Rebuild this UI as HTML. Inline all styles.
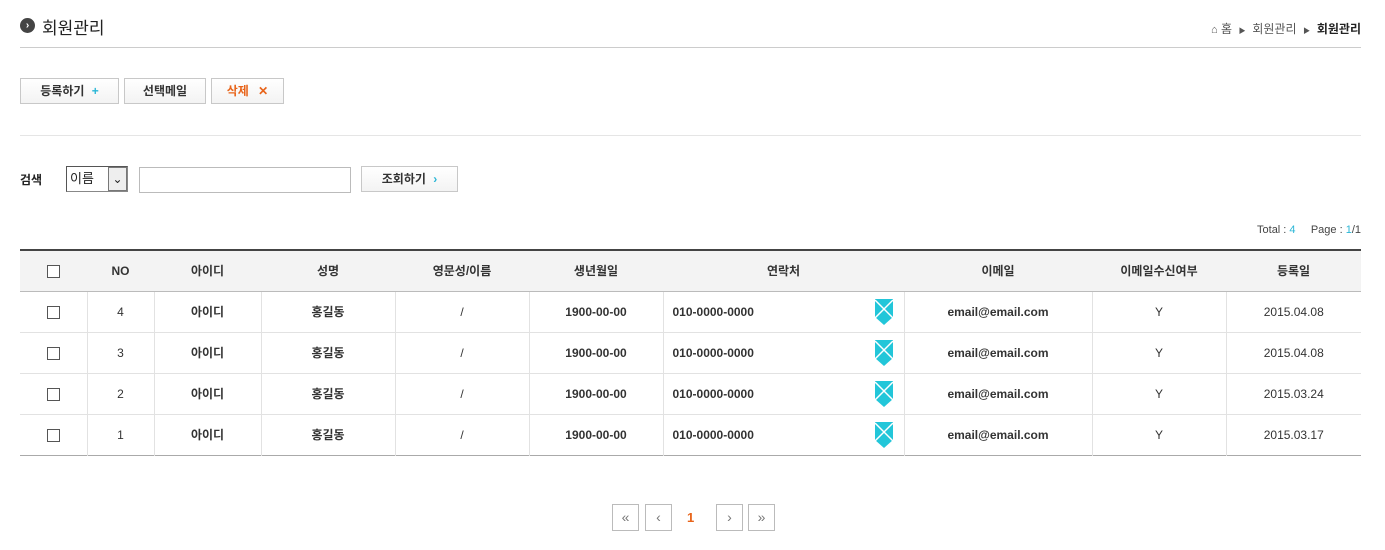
<!DOCTYPE html>
<html><head><meta charset="utf-8"><style>
*{margin:0;padding:0;box-sizing:border-box}
body{width:1385px;height:550px;background:#fff;font-family:"Liberation Sans","Noto Sans CJK KR",sans-serif;color:#222;position:relative;overflow:hidden;font-size:12px}
.a{position:absolute}
.btn{position:absolute;height:26px;border:1px solid #c8c8c8;background:linear-gradient(#fff,#f3f3f3);font-size:12px;font-weight:bold;line-height:24px;text-align:center;color:#333}
table{position:absolute;left:20px;top:249px;width:1341px;border-collapse:collapse;border-top:2px solid #444;border-bottom:1px solid #aaa;font-size:12px}
th{height:41px;background:#f3f3f3;border-bottom:1px solid #bbb;font-weight:bold;color:#333}
td{height:41px;border-top:1px solid #e2e2e2;text-align:center;font-weight:bold;color:#333}
td+td{border-left:1px solid #e2e2e2}
td.n{font-weight:normal}
.cb{display:inline-block;width:13px;height:13px;border:1px solid #555;background:#fff;vertical-align:middle}
.pg{position:absolute;top:504px;width:27px;height:27px;border:1px solid #bbb;text-align:center;line-height:24px;color:#777;font-size:14px}
</style></head><body>
<div class="a" style="left:20px;top:18px;width:15px;height:15px;border-radius:50%;background:#444;color:#fff;font-size:10px;line-height:15px;text-align:center;font-weight:bold">›</div>
<div class="a" style="left:42px;top:14px;font-size:17px;color:#222">회원관리</div>
<div class="a" style="right:24px;top:20px;font-size:12px;color:#555"><span style="font-size:11px">⌂</span> 홈 &nbsp;<span style="font-size:7px">▶</span>&nbsp; 회원관리 &nbsp;<span style="font-size:7px">▶</span>&nbsp; <b style="color:#222">회원관리</b></div>
<div class="a" style="left:20px;top:47px;width:1341px;height:1px;background:#ccc"></div>
<div class="btn" style="left:20px;top:78px;width:99px">등록하기 <span style="color:#29b6d6;margin-left:4px">+</span></div>
<div class="btn" style="left:124px;top:78px;width:82px">선택메일</div>
<div class="btn" style="left:211px;top:78px;width:73px;color:#e8641a">삭제 <span style="margin-left:6px">✕</span></div>
<div class="a" style="left:20px;top:135px;width:1341px;height:1px;background:#e5e5e5"></div>
<div class="a" style="left:20px;top:171px;font-weight:bold;font-size:12px">검색</div>
<div class="a" style="left:66px;top:166px;width:62px;height:26px;border:1px solid #888;border-top-color:#555;border-left-color:#555;background:#fff;font-size:13px;line-height:24px;padding-left:3px">이름<div class="a" style="right:0;top:0;width:19px;height:24px;border:1px solid #777;background:#eee;text-align:center;line-height:22px;font-size:12px">&#8964;</div></div>
<div class="a" style="left:139px;top:167px;width:212px;height:26px;border:1px solid #bbb"></div>
<div class="btn" style="left:361px;top:166px;width:97px">조회하기 <span style="color:#29b6d6;margin-left:4px">›</span></div>
<div class="a" style="right:24px;top:224px;font-size:11px;color:#444">Total : <span style="color:#29b6d6">4</span> &nbsp;&nbsp;&nbsp; Page : <span style="color:#29b6d6">1</span>/1</div>
<table>
<colgroup><col style="width:67px"><col style="width:67px"><col style="width:107px"><col style="width:134px"><col style="width:134px"><col style="width:134px"><col style="width:241px"><col style="width:188px"><col style="width:134px"><col></colgroup>
<tr><th><span class="cb"></span></th><th>NO</th><th>아이디</th><th>성명</th><th>영문성/이름</th><th>생년월일</th><th>연락처</th><th>이메일</th><th>이메일수신여부</th><th>등록일</th></tr>
<tr><td><span class="cb"></span></td><td class="n">4</td><td>아이디</td><td>홍길동</td><td class="n">/</td><td>1900-00-00</td><td style="text-align:left;padding-left:9px;position:relative">010-0000-0000<svg style="position:absolute;right:10px;top:7px" width="20" height="26" viewBox="0 0 20 26"><path d="M1 0h18v18l-9 8-9-8z" fill="#22c6d9"/><path d="M1 1l18 18M19 1L1 19" stroke="#fff" stroke-width="1.5"/></svg></td><td>email@email.com</td><td class="n">Y</td><td class="n">2015.04.08</td></tr>
<tr><td><span class="cb"></span></td><td class="n">3</td><td>아이디</td><td>홍길동</td><td class="n">/</td><td>1900-00-00</td><td style="text-align:left;padding-left:9px;position:relative">010-0000-0000<svg style="position:absolute;right:10px;top:7px" width="20" height="26" viewBox="0 0 20 26"><path d="M1 0h18v18l-9 8-9-8z" fill="#22c6d9"/><path d="M1 1l18 18M19 1L1 19" stroke="#fff" stroke-width="1.5"/></svg></td><td>email@email.com</td><td class="n">Y</td><td class="n">2015.04.08</td></tr>
<tr><td><span class="cb"></span></td><td class="n">2</td><td>아이디</td><td>홍길동</td><td class="n">/</td><td>1900-00-00</td><td style="text-align:left;padding-left:9px;position:relative">010-0000-0000<svg style="position:absolute;right:10px;top:7px" width="20" height="26" viewBox="0 0 20 26"><path d="M1 0h18v18l-9 8-9-8z" fill="#22c6d9"/><path d="M1 1l18 18M19 1L1 19" stroke="#fff" stroke-width="1.5"/></svg></td><td>email@email.com</td><td class="n">Y</td><td class="n">2015.03.24</td></tr>
<tr><td><span class="cb"></span></td><td class="n">1</td><td>아이디</td><td>홍길동</td><td class="n">/</td><td>1900-00-00</td><td style="text-align:left;padding-left:9px;position:relative">010-0000-0000<svg style="position:absolute;right:10px;top:7px" width="20" height="26" viewBox="0 0 20 26"><path d="M1 0h18v18l-9 8-9-8z" fill="#22c6d9"/><path d="M1 1l18 18M19 1L1 19" stroke="#fff" stroke-width="1.5"/></svg></td><td>email@email.com</td><td class="n">Y</td><td class="n">2015.03.17</td></tr>
</table>
<div class="pg" style="left:612px">«</div>
<div class="pg" style="left:645px">‹</div>
<div class="a" style="left:687px;top:510px;color:#e8641a;font-weight:bold;font-size:13px">1</div>
<div class="pg" style="left:716px">›</div>
<div class="pg" style="left:748px">»</div>
</body></html>
